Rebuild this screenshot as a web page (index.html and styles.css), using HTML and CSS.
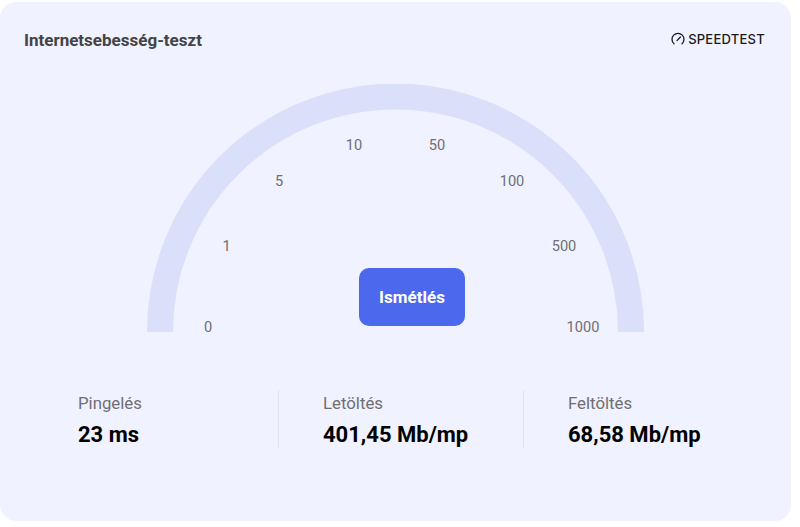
FILE: index.html
```html
<!DOCTYPE html>
<html>
<head>
<meta charset="utf-8" />
<title>Internetsebesség-teszt</title>
<link rel="stylesheet" href="styles.css">
</head>
<body>
<div class="card">
 <div class="cardHead">
  <h2 class="cardTitle">Internetsebesség-teszt</h2>
  <div class="logo">
   <svg class="logoIcon" width="14" height="14" viewBox="0 0 14 14">
    <path d="M3 11.8 A6 6 0 1 1 11 11.8" fill="none" stroke="#1a1a1a" stroke-width="1.3" stroke-linecap="round"/>
    <path d="M6 8.6 L9.4 5" fill="none" stroke="#1a1a1a" stroke-width="1.3" stroke-linecap="round"/>
   </svg>
   <span class="logoText">SPEEDTEST</span>
  </div>
 </div>

 <div class="gauge">
  <svg class="gaugeArc" width="497" height="248" viewBox="0 0 497 248">
   <path d="M13 248 A235.5 235.5 0 0 1 484 248" fill="none" stroke="#dadffa" stroke-width="26"/>
  </svg>
  <span class="tick t0">0</span>
  <span class="tick t1">1</span>
  <span class="tick t5">5</span>
  <span class="tick t10">10</span>
  <span class="tick t50">50</span>
  <span class="tick t100">100</span>
  <span class="tick t500">500</span>
  <span class="tick t1000">1000</span>
  <button class="repeatBtn">Ismétlés</button>
 </div>

 <div class="stats">
  <div class="stat">
   <div class="statLabel">Pingelés</div>
   <div class="statValue">23 ms</div>
  </div>
  <div class="stat">
   <div class="statLabel">Letöltés</div>
   <div class="statValue">401,45 Mb/mp</div>
  </div>
  <div class="stat">
   <div class="statLabel">Feltöltés</div>
   <div class="statValue">68,58 Mb/mp</div>
  </div>
 </div>
</div>
</body>
</html>
```

FILE: styles.css
```css
body {
margin:0; background-color:#fff;
font-family: "Roboto", sans-serif;
}
.card {
width:791px; height:519px; margin-top:2px; border-radius:16px;
background-color:#f0f2ff; box-sizing:border-box; padding-top:27px;
}
.cardHead {
display:flex; justify-content:space-between; align-items:center;
padding:0 26px 0 24px; height:22px;
}
.cardTitle {
margin:0; font-size:17px; font-weight:700; color:#444;
}
.logo { display:flex; align-items:center; gap:3px; margin-top:-2px; }
.logoIcon { display:block; }
.logoText {
font-family: "Inter", sans-serif; font-size:13px; font-weight:500; color:#1a1a1a; letter-spacing:.25px;
}

/* gauge: the labels sit on the arc so they are placed by hand */
.gauge {
position:relative; width:497px; height:248px; margin:33px 0 0 147px;
}
.gaugeArc { display:block; }
.tick {
position:absolute; font-size:14.6px; line-height:16px; color:#6f6f73;
transform:translateX(-50%);
}
.t0 { left:61px; top:235px; }
.t1 { left:79.5px; top:154px; }
.t5 { left:132px; top:89px; }
.t10 { left:207px; top:53px; }
.t50 { left:290px; top:53px; }
.t100 { left:365px; top:89px; }
.t500 { left:417px; top:154px; }
.t1000 { left:436px; top:235px; }
.repeatBtn {
position:absolute; left:212px; top:184px; width:106px; height:58px;
border:none; border-radius:10px; background-color:#4c68ec; color:#fff;
font-family: "Roboto", sans-serif; font-size:17px; font-weight:700;
}

.stats {
display:flex; margin:58px 0 0 33px;
}
.stat {
width:245px; height:58px; box-sizing:border-box; padding-left:44px;
border-left:1px solid #dfe1ee;
}
.stat:first-child { border-left:none; padding-left:45px; }
.statLabel { font-size:16.8px; line-height:24px; color:#6f6f73; margin-top:1px; }
.statValue { font-size:22px; line-height:30px; font-weight:700; color:#000; margin-top:5px; }
```
